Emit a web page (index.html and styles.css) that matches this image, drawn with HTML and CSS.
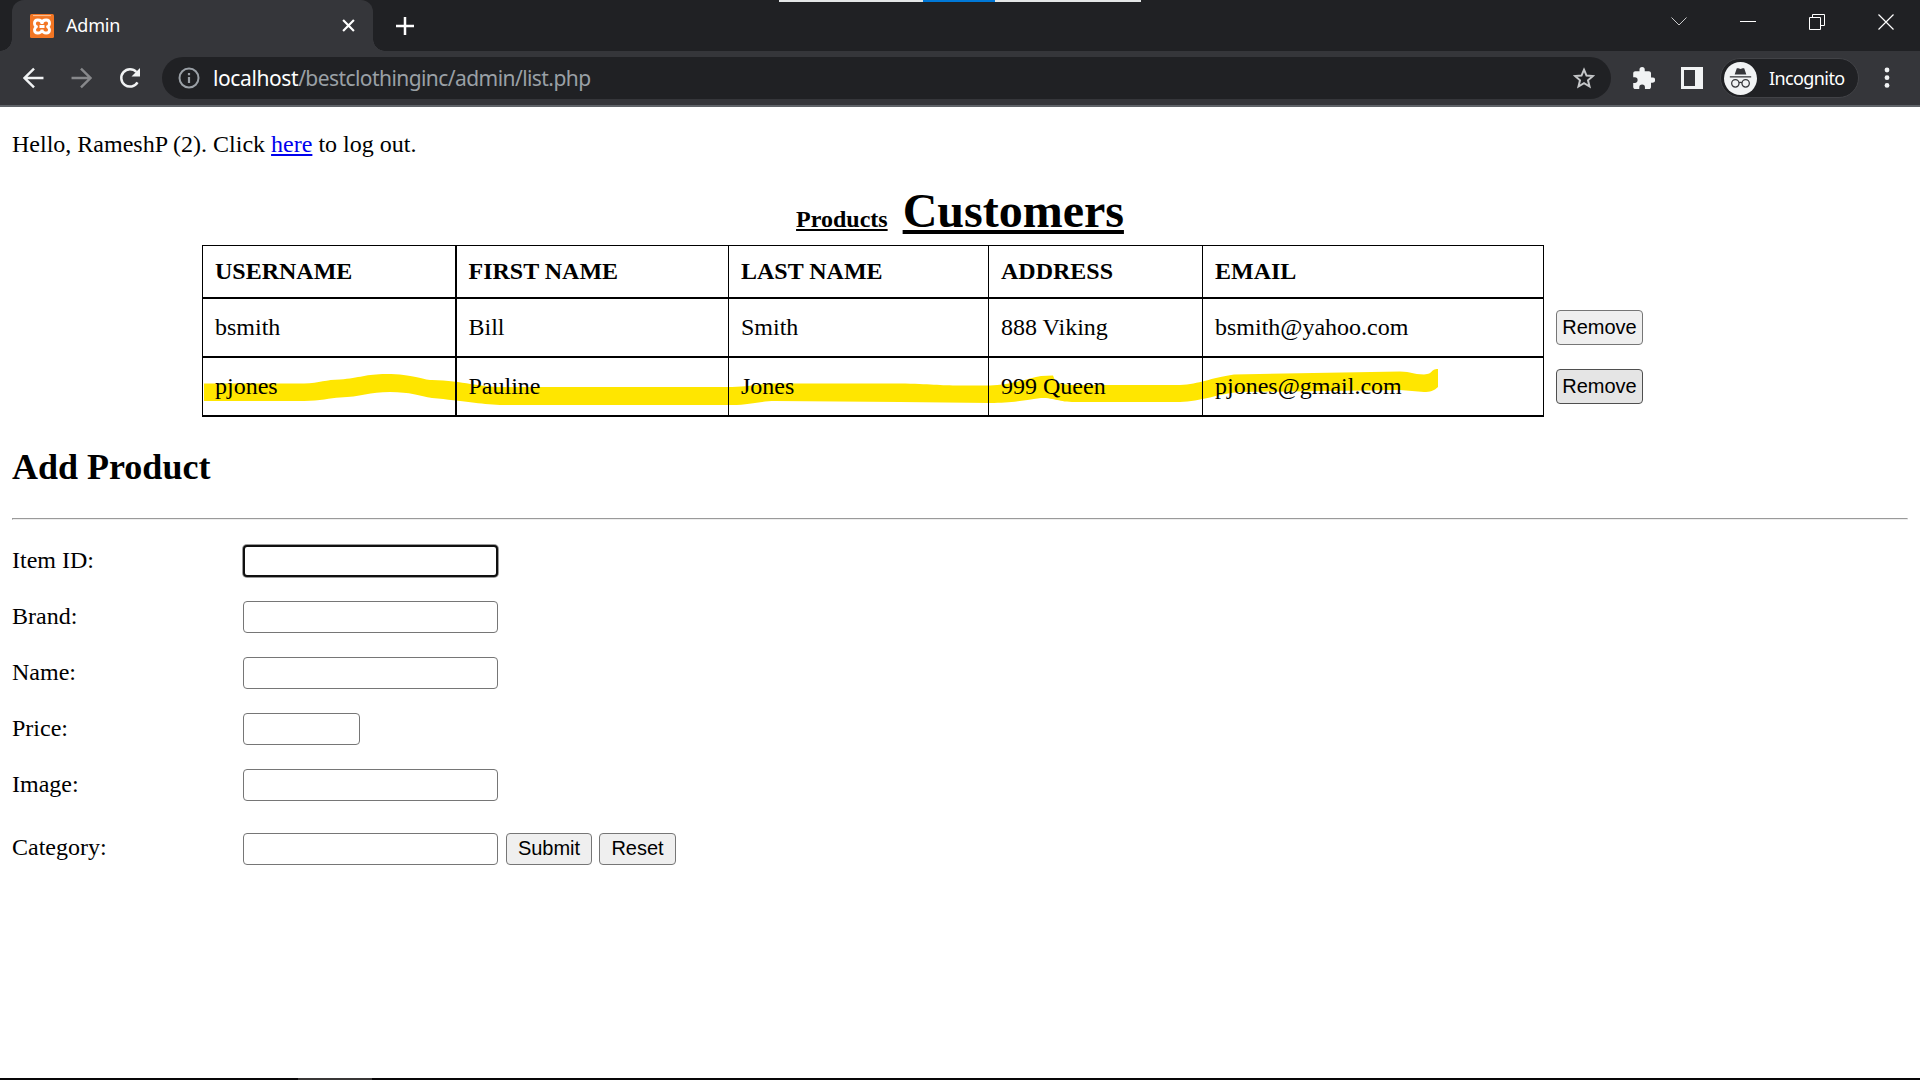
FILE: index.html
```html
<!DOCTYPE html>
<html lang="en">
<head>
<meta charset="utf-8">
<title>Admin</title>
<link rel="stylesheet" href="styles.css">
</head>
<body>
<header class="browser">
  <div class="tabstrip">
    <div class="tab">
      <svg class="favicon" viewBox="0 0 24 24"><rect width="24" height="24" rx="1.500" fill="#f37623"/><path d="M3 1.6h18" stroke="#fbc49b" stroke-width="1"/><path d="M9.500 12.500h5M12 10c0-3-2-4-4.200-4S4.500 7.500 4.500 9.300s1 3.200 1.800 3.200-1.800 1.200-1.800 3.200 1.300 3.300 3.300 3.300 4.200-1.200 4.200-3.500M12 10c0-3 2-4 4.200-4s3.300 1.500 3.300 3.300-1 3.200-1.800 3.200 1.800 1.200 1.800 3.200-1.300 3.300-3.300 3.300-4.200-1.200-4.200-3.500" fill="none" stroke="#fff" stroke-width="2.900"/></svg>
      <span class="tab-title">Admin</span>
      <svg class="tab-close" viewBox="0 0 12 12"><path d="M1 1l10 10M11 1L1 11" stroke="#fff" stroke-width="2"/></svg>
    </div>
    <svg class="new-tab" viewBox="0 0 18 18"><path d="M9 0v18M0 9h18" stroke="#fff" stroke-width="2.500"/></svg>
    <div class="window-controls">
      <svg width="16" height="16" viewBox="0 0 16 16"><path d="M.5 3.500L8 11l7.500-7.500" fill="none" stroke="#c9cacb"/></svg>
      <svg width="16" height="16" viewBox="0 0 16 16"><path d="M0 7.500h16" stroke="#fff"/></svg>
      <svg width="16" height="16" viewBox="0 0 16 16"><path d="M.5 3.500h11v12H.5zM3.500 3.500v-3h12v11h-4" fill="none" stroke="#fff"/></svg>
      <svg width="16" height="16" viewBox="0 0 16 16"><path d="M.5.5l15 15M15.500.5l-15 15" stroke="#fff" stroke-width="1.200"/></svg>
    </div>
  </div>
  <div class="toolbar">
    <svg class="nav" viewBox="0 0 20 20"><path d="M19.500 10H2M10.500 1L1.500 10l9 9" fill="none" stroke="#f1f3f4" stroke-width="2.300"/></svg>
    <svg class="nav" viewBox="0 0 20 20"><path d="M.5 10H18M9.500 1l9 9-9 9" fill="none" stroke="#87888b" stroke-width="2.300"/></svg>
    <svg class="nav reload" viewBox="0 0 22 22"><path d="M18.500 15.300A8.700 8.700 0 1 1 17.400 5" fill="none" stroke="#f1f3f4" stroke-width="2.500"/><path d="M21 1v8.500h-8.500z" fill="#f1f3f4"/></svg>
    <div class="omnibox">
      <svg class="info" viewBox="0 0 22 22"><circle cx="11" cy="11" r="9.500" fill="none" stroke="#9aa0a6" stroke-width="2"/><path d="M11 10v6M11 6v2.300" stroke="#9aa0a6" stroke-width="2.200"/></svg>
      <span class="url"><b>localhost</b>/bestclothinginc/admin/list.php</span>
      <svg class="star" viewBox="0 0 22 22"><path d="M11 2.700l2.500 5.900 6.400.5-4.900 4.200 1.500 6.200-5.500-3.300-5.500 3.300L7 13.300 2.100 9.100l6.400-.5z" fill="none" stroke="#c5c7c9" stroke-width="2"/></svg>
    </div>
    <svg class="puzzle" viewBox="1.800 1 21 21"><path d="M20.500 11H19V7c0-1.100-.9-2-2-2h-4V3.500a2.500 2.500 0 0 0-5 0V5H4c-1.100 0-2 .9-2 2v3.800h1.500a2.700 2.700 0 0 1 0 5.400H2V20c0 1.100.9 2 2 2h3.800v-1.500a2.700 2.700 0 0 1 5.400 0V22H17c1.100 0 2-.9 2-2v-4h1.500a2.500 2.500 0 0 0 0-5z" fill="#f1f3f4"/></svg>
    <svg class="panel" viewBox="0 0 22 22"><path d="M0 0h22v22H0zM3 3v16h11V3z" fill="#f1f3f4" fill-rule="evenodd"/></svg>
    <div class="profile">
      <svg class="avatar" viewBox="0 0 34 34"><circle cx="17" cy="17" r="17" fill="#f1f3f4"/><path d="M11 13l2.200-6.500h1.500l2.300.7 2.300-.7h1.500L23 13z" fill="#35363a"/><path d="M6 15.300h22" stroke="#35363a" stroke-width="1.300"/><g fill="none" stroke="#35363a" stroke-width="1.300"><circle cx="11.700" cy="22" r="3.800"/><circle cx="22.300" cy="22" r="3.800"/><path d="M15.500 21.300q1.500-.8 3 0"/></g></svg>
      <span>Incognito</span>
    </div>
    <svg class="menu" viewBox="0 0 6 22"><g fill="#f1f3f4"><circle cx="3" cy="3" r="2.400"/><circle cx="3" cy="10.700" r="2.400"/><circle cx="3" cy="18.400" r="2.400"/></g></svg>
  </div>
  <div class="capture-strip"><i></i></div>
</header>
<main class="page">
  <p class="greeting">Hello, RameshP (2). Click <a href="#">here</a> to log out.</p>
  <nav class="views"><a class="view">Products</a><a class="view current">Customers</a></nav>
  <section class="listing">
    <table class="customers">
      <colgroup><col class="c1"><col class="c2"><col class="c3"><col class="c4"><col class="c5"></colgroup>
      <tr class="head"><th>USERNAME</th><th>FIRST NAME</th><th>LAST NAME</th><th>ADDRESS</th><th>EMAIL</th></tr>
      <tr><td>bsmith</td><td>Bill</td><td>Smith</td><td>888 Viking</td><td>bsmith@yahoo.com</td></tr>
      <tr><td>pjones</td><td>Pauline</td><td>Jones</td><td>999 Queen</td><td>pjones@gmail.com</td></tr>
    </table>
    <div class="actions"><button class="btn remove">Remove</button><button class="btn remove active">Remove</button></div>
    <svg class="marker" viewBox="202 360 1240 60"><path d="M204 383.500H304C320 383 326 379.500 340 379.500C360 378 366 374 386 374C414 374 422 380 432 380C464 381 480 387 500 387H732C750 387 760 383.500 775 383.500H900C930 384 940 385.500 960 385.500H990C1010 385 1030 378 1041 376L1053 375.500L1056 383L1070 385H1180C1200 384 1210 378 1234 374.500L1400 371.500C1412 371.500 1412 374.500 1424 374.500C1434 374 1430 369 1438 369V387C1434 391 1430 392 1424 392L1400 390L1240 392C1220 393 1200 402 1180 402H1075C1058 402 1056 398 1041 398C1020 401 1010 403 990 403L900 402L775 401C760 401 750 405 732 405H500C480 404 464 401 432 398C420 396 410 392 390 392C370 392 360 397 340 397.500C330 398 320 401 304 401H204Z" fill="#ffe600"/></svg>
  </section>
  <h2 class="form-title">Add Product</h2>
  <hr class="rule">
  <form class="product-form">
    <div class="field"><label>Item ID:</label><input class="box focused"></div>
    <div class="field"><label>Brand:</label><input class="box"></div>
    <div class="field"><label>Name:</label><input class="box"></div>
    <div class="field"><label>Price:</label><input class="box short"></div>
    <div class="field"><label>Image:</label><input class="box"></div>
    <div class="field last"><label>Category:</label><input class="box"><button type="button" class="btn submit">Submit</button><button type="button" class="btn reset">Reset</button></div>
  </form>
</main>
<footer class="taskbar"><i></i></footer>
</body>
</html>
```
FILE: styles.css
```css
* { box-sizing: border-box; }
body { margin: 0; width: 1920px; height: 1080px; overflow: hidden; display: flex; flex-direction: column; background: #fff; color: #000; font: 24px/28px "Liberation Serif", serif; }
svg { display: block; flex: none; }
.browser { position: relative; height: 107px; background: #35363a; border-bottom: 2px solid #5f6368; font-family: "Noto Sans", sans-serif; color: #fff; flex: none; }
.tabstrip { height: 51px; background: #202124; display: flex; align-items: center; padding-left: 12px; }
.tab { position: relative; width: 361px; height: 51px; background: #35363a; border-radius: 12px 12px 0 0; display: flex; align-items: center; padding: 0 18px; }
.tab::before, .tab::after { content: ""; position: absolute; bottom: 0; width: 12px; height: 12px; }
.tab::before { left: -12px; background: radial-gradient(circle at 0 0, #202124 11.5px, #35363a 12px); }
.tab::after { right: -12px; background: radial-gradient(circle at 100% 0, #202124 11.5px, #35363a 12px); }
.favicon { width: 24px; height: 24px; }
.tab-title { margin-left: 12px; padding-bottom: 2px; font-size: 18px; letter-spacing: -.2px; flex: 1; }
.tab-close { width: 13px; height: 13px; }
.new-tab { width: 18px; height: 18px; margin-left: 23px; }
.window-controls { margin-left: auto; display: flex; gap: 53px; padding: 0 26px 7px 0; }
.toolbar { height: 54px; display: flex; align-items: center; padding-left: 23px; }
.nav { width: 21px; height: 22px; margin-right: 27px; }
.reload { width: 22px; margin-right: 21px; }
.omnibox { width: 1449px; height: 42px; border-radius: 21px; background: #202124; display: flex; align-items: center; padding: 0 16px; }
.info { width: 22px; height: 22px; }
.url { margin-left: 13px; font-size: 21px; letter-spacing: -.57px; color: #9aa0a6; flex: 1; white-space: nowrap; }
.url b { font-weight: 400; color: #fff; letter-spacing: -.4px; }
.star { width: 22px; height: 22px; }
.puzzle { width: 22px; height: 22px; margin-left: 22px; }
.panel { width: 22px; height: 22px; margin-left: 26px; }
.profile { width: 139px; height: 40px; margin-left: 17px; border: 1px solid #424347; border-radius: 20px; background: #202124; display: flex; align-items: center; padding-left: 3px; font-size: 18px; letter-spacing: -.6px; }
.avatar { width: 33px; height: 33px; margin-right: 12px; }
.menu { width: 6px; height: 22px; margin-left: 25px; }
.capture-strip { position: absolute; top: 0; left: 779px; width: 362px; height: 2px; background: #e3e6e6; }
.capture-strip i { display: block; width: 72px; height: 2px; margin-left: 144px; background: #0078d7; }
.page { flex: 1; padding: 0 12px; }
.greeting { margin: 23px 0 0; }
.greeting a { color: #00e; }
.views { display: flex; justify-content: center; align-items: baseline; gap: 15px; height: 61px; margin-top: 25px; font-weight: 700; }
.view { text-decoration: underline; }
.current { font-size: 48px; line-height: 56px; }
.listing { position: relative; display: flex; margin: 1px 0 0 190px; }
.customers { border-collapse: collapse; table-layout: fixed; width: 1341px; height: 171px; position: relative; z-index: 1; }
.c1 { width: 253px; } .c2 { width: 273px; } .c3 { width: 260px; } .c4 { width: 214px; } .c5 { width: 341px; }
.customers th, .customers td { border: 1px solid #000; padding: 0 12px; text-align: left; height: 59px; }
.customers tr > * { border-bottom-width: 2px; }
.customers tr > :first-child { border-right-width: 2px; }
.customers .head th { height: 52px; padding-bottom: 1px; }
.marker { position: absolute; left: 0; top: 115px; width: 1240px; height: 60px; z-index: 0; }
.actions { display: flex; flex-direction: column; gap: 24px; height: 159px; padding: 65px 0 0 12px; }
.btn { font: 20px/24px "Liberation Sans", sans-serif; color: #000; background: #efefef; border: 1px solid #767676; border-radius: 4px; padding: 0 0 2px; }
.remove { width: 87px; height: 35px; flex: none; }
.active { background: #e5e5e5; border-color: #4f4f4f; }
.form-title { margin: 29px 0 0; font-size: 36px; line-height: 42px; }
.rule { margin: 30px 0 0; border: 1px solid #9a9a9a; border-right-color: #eee; border-bottom-color: #eee; }
.product-form { display: flex; flex-direction: column; gap: 24px; margin-top: 25px; }
.field { display: flex; height: 32px; align-items: center; }
.field label { width: 231px; padding-bottom: 1px; }
.last { margin-top: 8px; }
.last label { padding-bottom: 3px; }
.box { width: 255px; height: 32px; border: 1px solid #767676; border-radius: 4px; padding: 0; background: #fff; }
.focused { border: 2px solid #101010; box-shadow: 0 0 0 1px #999; }
.short { width: 117px; }
.submit { width: 86px; height: 32px; margin-left: 8px; }
.reset { width: 77px; height: 32px; margin-left: 7px; }
.taskbar { height: 2px; background: #080608; flex: none; }
.taskbar i { display: block; width: 74px; height: 2px; margin-left: 298px; background: #393737; }
```
